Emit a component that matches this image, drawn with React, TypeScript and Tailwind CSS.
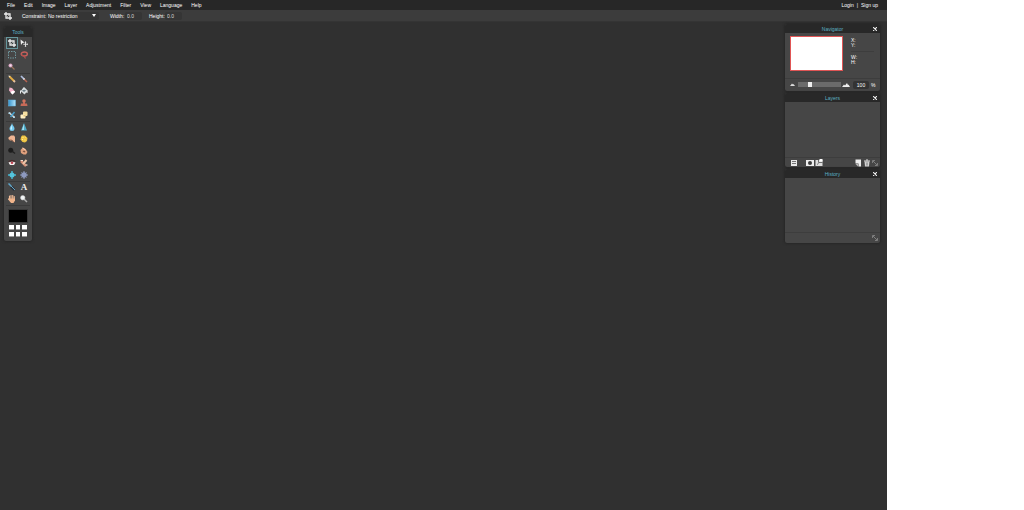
import type { ReactNode } from "react";

const menus = ["File", "Edit", "Image", "Layer", "Adjustment", "Filter", "View", "Language", "Help"];

function Icon({ children }: { children: ReactNode }) {
  return (
    <svg viewBox="0 0 16 16" className="block h-2 w-2" aria-hidden="true">
      {children}
    </svg>
  );
}

const crop = (
  <Icon>
    <path d="M4 0v12h12M0 4h12v12" fill="none" stroke="#eee" strokeWidth="2.6" />
    <path d="M5 11l6-6" stroke="#ccc" strokeWidth="1.4" />
  </Icon>
);

type Tool = { name: string; icon: ReactNode };

const groups: Tool[][] = [
  [
    { name: "Crop", icon: crop },
    {
      name: "Move",
      icon: (
        <Icon>
          <path d="M1 1l8 6-4 1-3 4z" fill="#eee" />
          <path d="M11 6v9M6.500 10.500h9" stroke="#ddd" strokeWidth="2" />
          <path d="M11 4l2 3H9zM11 16l2-2H9zM16 10.500l-2-2v4z" fill="#ddd" />
        </Icon>
      ),
    },
    {
      name: "Marquee",
      icon: (
        <Icon>
          <rect x="1" y="1" width="14" height="13" fill="none" stroke="#6f979e" strokeWidth="2" strokeDasharray="3 2" />
        </Icon>
      ),
    },
    {
      name: "Lasso",
      icon: (
        <Icon>
          <ellipse cx="8.500" cy="6" rx="6.200" ry="4" fill="none" stroke="#c8605c" strokeWidth="2.600" />
          <path d="M3 8l5 2 3 5" fill="none" stroke="#b8504c" strokeWidth="2.400" />
        </Icon>
      ),
    },
    {
      name: "Wand",
      icon: (
        <Icon>
          <path d="M7 7l6 6" stroke="#9b7358" strokeWidth="2.600" />
          <circle cx="5" cy="5" r="4" fill="#d5a0bd" />
          <circle cx="5" cy="5" r="2" fill="#f6e6ef" />
        </Icon>
      ),
    },
  ],
  [
    {
      name: "Pencil",
      icon: (
        <Icon>
          <path d="M3 3l9 9" stroke="#e5ad42" strokeWidth="3.600" />
          <path d="M1 1l4 1-3 3z" fill="#fff0d0" />
          <path d="M11 11l3 3" stroke="#e6c1a0" strokeWidth="3.600" />
        </Icon>
      ),
    },
    {
      name: "Brush",
      icon: (
        <Icon>
          <path d="M8 8l6 6" stroke="#b86452" strokeWidth="3" />
          <path d="M2 2l6 6" stroke="#aebdde" strokeWidth="3.500" />
          <path d="M7 7l2 2" stroke="#eee" strokeWidth="3.500" />
        </Icon>
      ),
    },
    {
      name: "Eraser",
      icon: (
        <Icon>
          <path d="M3 1l5 1 6 7-5 6-7-8z" fill="#f4b4ca" />
          <path d="M8 8l5 0 1 2-5 5-4-4z" fill="#fff" />
        </Icon>
      ),
    },
    {
      name: "Paint bucket",
      icon: (
        <Icon>
          <path d="M1 8l7-7 7 7-6 7z" fill="#d5dadc" />
          <path d="M4 7c3-2 6-2 8 0l-4 3z" fill="#6b7d86" />
          <path d="M1 7v6M5 5l3-4 6 6v5" fill="none" stroke="#e8eef0" strokeWidth="2" />
        </Icon>
      ),
    },
    {
      name: "Gradient",
      icon: (
        <Icon>
          <defs>
            <linearGradient id="blue">
              <stop stopColor="#3694ce" />
              <stop offset="1" stopColor="#b4e4fa" />
            </linearGradient>
          </defs>
          <rect x="1" y="2" width="14" height="12" fill="url(#blue)" stroke="#62b4df" />
        </Icon>
      ),
    },
    {
      name: "Clone stamp",
      icon: (
        <Icon>
          <circle cx="8" cy="4" r="3.500" fill="#d1745f" />
          <path d="M6 6h4v3h4l1 5H1l1-5h4z" fill="#c66a58" />
        </Icon>
      ),
    },
    {
      name: "Color replace",
      icon: (
        <Icon>
          <path d="M2 3l11 10" stroke="#e8e8e8" strokeWidth="3" />
          <path d="M13 2L5 12" stroke="#4ba3cf" strokeWidth="3" />
          <path d="M1 3h4v3H1zM10 11h4v3h-4z" fill="#a9d2e5" />
        </Icon>
      ),
    },
    {
      name: "Drawing",
      icon: (
        <Icon>
          <rect x="6" y="1" width="9" height="9" rx="2" fill="#f6dfa0" />
          <rect x="1" y="7" width="10" height="8" rx="2" fill="#fff0c5" />
          <path d="M7 8h4v3H7z" fill="#e1c47b" />
        </Icon>
      ),
    },
  ],
  [
    {
      name: "Blur",
      icon: (
        <Icon>
          <path d="M8 0c1 5 5 7 5 11a5 5 0 0 1-10 0C3 7 7 5 8 0z" fill="#74c9ef" />
          <path d="M8 3v10H5c-1-4 2-5 3-10z" fill="#c7efff" />
        </Icon>
      ),
    },
    {
      name: "Sharpen",
      icon: (
        <Icon>
          <path d="M8 0l6 15H2z" fill="#4eabc9" />
          <path d="M8 1v13H4z" fill="#a9e0ef" />
        </Icon>
      ),
    },
    {
      name: "Smudge",
      icon: (
        <Icon>
          <path d="M1 5l5-4h6l2 3v11l-3-2-2-3-5 1-3-3z" fill="#edb493" />
          <path d="M3 9l5 1 3 4" fill="none" stroke="#b5775a" strokeWidth="1.500" />
        </Icon>
      ),
    },
    {
      name: "Sponge",
      icon: (
        <Icon>
          <path d="M4 1h6l5 5-1 6-4 3-5-1-4-5 1-5z" fill="#efc443" />
          <path d="M5 5h2M10 5h1M4 9h2M9 10h2" stroke="#fff097" strokeWidth="2" />
        </Icon>
      ),
    },
    {
      name: "Dodge",
      icon: (
        <Icon>
          <circle cx="5.500" cy="6.500" r="5" fill="#1c1c1c" />
          <path d="M9 9l5 4" stroke="#222" strokeWidth="3" />
        </Icon>
      ),
    },
    {
      name: "Burn",
      icon: (
        <Icon>
          <path d="M1 6l5-5 5 3 4 6-3 5H7l-5-3z" fill="#dfa07d" />
          <path d="M5 9l3-2 3 2-2 2z" fill="#7a5443" />
          <path d="M5 2l6 4" stroke="#ffd4b5" strokeWidth="2" />
        </Icon>
      ),
    },
    {
      name: "Red eye",
      icon: (
        <Icon>
          <path d="M1 7c4-2 10-2 14 0l-3 5H4z" fill="#f4eded" />
          <path d="M1 5c4-3 10-3 14 0" fill="none" stroke="#4a2929" strokeWidth="2" />
          <circle cx="8" cy="7.500" r="2.600" fill="#bf4554" />
        </Icon>
      ),
    },
    {
      name: "Spot heal",
      icon: (
        <Icon>
          <path d="M2 4l10 10" stroke="#d18b73" strokeWidth="5" />
          <path d="M13 2L6 10" stroke="#edc6a9" strokeWidth="4" />
          <path d="M1 3h5M11 12h4" stroke="#f5ddcf" strokeWidth="2" />
        </Icon>
      ),
    },
    {
      name: "Bloat",
      icon: (
        <Icon>
          <path d="M8 0v16M0 8h16" stroke="#45b5d0" strokeWidth="3" />
          <circle cx="8" cy="8" r="5" fill="#55c4dc" />
        </Icon>
      ),
    },
    {
      name: "Pinch",
      icon: (
        <Icon>
          <circle cx="8" cy="8" r="5.500" fill="#8d99c2" />
          <path d="M8 0v16M0 8h16M3 3l10 10M13 3L3 13" stroke="#8d99bd" strokeWidth="2" />
        </Icon>
      ),
    },
  ],
  [
    {
      name: "Color picker",
      icon: (
        <Icon>
          <path d="M1 1l7 7" stroke="#5fa8cd" strokeWidth="3" />
          <path d="M6 7l7 7" stroke="#26323a" strokeWidth="5" />
          <path d="M6 6l8 8" stroke="#6ba4c4" strokeWidth="2" />
        </Icon>
      ),
    },
    {
      name: "Type",
      icon: <span className="font-['Liberation_Serif',serif] text-[9px] leading-2 font-bold text-[#eee]">A</span>,
    },
    {
      name: "Hand",
      icon: (
        <Icon>
          <path d="M3 2v8M6 1v8M9.500 1v8M12.500 3v8M1 8l5 5" fill="none" stroke="#f2bd98" strokeWidth="2.300" strokeLinecap="round" />
          <path d="M3 7h11v4l-3 5H6l-3-4z" fill="#efb38a" />
        </Icon>
      ),
    },
    {
      name: "Zoom",
      icon: (
        <Icon>
          <path d="M8 8l6 6" stroke="#aaa" strokeWidth="3" />
          <circle cx="5.500" cy="5.500" r="4.500" fill="#f2f5f6" stroke="#ccc" />
        </Icon>
      ),
    },
  ],
];

function Panel({ title, children }: { title: string; children: ReactNode }) {
  return (
    <section className="overflow-hidden rounded-[2px] bg-[#464646] shadow-[0_0_3px_#1d1d1d]">
      <header className="flex h-[9px] items-center bg-[#282828] px-[3px]">
        <span className="w-1" />
        <h2 className="flex-1 text-center text-[#5cb0c4]">{title}</h2>
        <button type="button" aria-label={`Close ${title}`} className="mt-px h-1 w-1">
          <svg viewBox="0 0 8 8" className="block h-1 w-1" aria-hidden="true">
            <path d="M0 0l8 8M8 0L0 8" stroke="#f0f0f0" strokeWidth="2.200" />
          </svg>
        </button>
      </header>
      {children}
    </section>
  );
}

function ResizeIcon() {
  return (
    <svg viewBox="0 0 12 12" className="block h-[6px] w-[6px]" aria-hidden="true">
      <path d="M1 6V1h5M11 6v5H6M2 2l8 8" fill="none" stroke="#8b8b8b" strokeWidth="1.600" />
    </svg>
  );
}

const layerActions: Tool[] = [
  {
    name: "Layer settings",
    icon: (
      <Icon>
        <path d="M2 2h12v12H2z" fill="#e8e8e8" />
        <path d="M4 5h8M4 9h8" stroke="#555" strokeWidth="1.600" />
      </Icon>
    ),
  },
  {
    name: "Add mask",
    icon: (
      <Icon>
        <path d="M0 2h16v12H0z" fill="#eee" />
        <circle cx="8" cy="8" r="4" fill="#3b3b3b" />
      </Icon>
    ),
  },
  {
    name: "Layer styles",
    icon: (
      <Icon>
        <path d="M1 2h14v12H1z" fill="#ddd" />
        <path d="M7 1v6h8M4 11l3-2" fill="none" stroke="#555" strokeWidth="1.600" />
        <path d="M9 0h6v5H9z" fill="#fff" />
      </Icon>
    ),
  },
  {
    name: "New layer",
    icon: (
      <Icon>
        <path d="M3 1h11v14H9V9H3z" fill="#eee" />
        <path d="M3 10l5 5v-5z" fill="#bbb" />
      </Icon>
    ),
  },
  {
    name: "Delete layer",
    icon: (
      <Icon>
        <path d="M3 5h10l-1 10H4z" fill="#ccc" />
        <path d="M2 4h12M6 2h4M6 7v6M10 7v6" stroke="#ddd" strokeWidth="2" />
        <path d="M8 7v6" stroke="#555" strokeWidth="1.500" />
      </Icon>
    ),
  },
];

function ActionButton({ tool }: { tool: Tool }) {
  return (
    <button type="button" aria-label={tool.name} className="h-2 w-2">
      {tool.icon}
    </button>
  );
}

export default function App() {
  return (
    <div className="flex min-h-screen bg-white font-['Liberation_Sans',sans-serif] text-[5px] leading-[6px] text-white">
      <div className="flex flex-1 flex-col bg-[#303030]">
        <nav className="flex h-[10px] items-center justify-between bg-[#272727] pr-[9px] pl-[7px]">
          <ul className="flex gap-[9px]">
            {menus.map((menu) => (
              <li key={menu} className="flex">
                <button type="button">{menu}</button>
              </li>
            ))}
          </ul>
          <div className="flex gap-[3px]">
            <a href="#login">Login</a>
            <span>|</span>
            <a href="#signup">Sign up</a>
          </div>
        </nav>

        <form className="flex h-3 items-center border-b border-[#343434] bg-[#3c3c3c] pl-1">
          {crop}
          <label htmlFor="constraint" className="ml-[10px] w-[25px]">
            Constraint:
          </label>
          <div className="flex h-2 w-[52px] items-center rounded-[2px] bg-[#353535] pr-[3px]">
            <select id="constraint" className="min-w-0 flex-1 appearance-none pl-px">
              <option>No restriction</option>
            </select>
            <svg viewBox="0 0 8 6" className="h-[3px] w-1" aria-hidden="true">
              <path d="M0 0h8L4 6z" fill="#fff" />
            </svg>
          </div>
          <label htmlFor="width" className="ml-[11px] w-[15px]">
            Width:
          </label>
          <input id="width" defaultValue="0.0" className="h-2 w-[17px] rounded-[2px] bg-[#353535] pl-[2px] text-[#ddd]" />
          <label htmlFor="height" className="ml-[7px] w-4">
            Height:
          </label>
          <input id="height" defaultValue="0.0" className="h-2 w-[17px] rounded-[2px] bg-[#353535] pl-[2px] text-[#ddd]" />
        </form>

        <main className="flex flex-1 items-start justify-between pr-[7px] pl-1">
          <section className="mt-[5px] w-7 overflow-hidden rounded-[2px] bg-[#464646] pb-1 shadow-[0_0_3px_#1d1d1d]">
            <h2 className="h-[10px] bg-[#282828] pt-[2px] text-center text-[#5cb0c4]">Tools</h2>
            {groups.map((group, i) => (
              <div key={i} className="mx-[2px] grid grid-cols-2 shadow-[0_1px_#3a3a3a]">
                {group.map((tool) => (
                  <button
                    key={tool.name}
                    type="button"
                    aria-label={tool.name}
                    className={
                      tool.name === "Crop"
                        ? "flex h-3 items-center justify-center border border-[#66969c] bg-[#3b4243]"
                        : "flex h-3 items-center justify-center"
                    }
                  >
                    {tool.icon}
                  </button>
                ))}
              </div>
            ))}
            <button type="button" aria-label="Foreground color" className="mx-auto mt-1 block h-[14px] w-5 border border-[#383838] bg-black" />
            <div className="mx-[5px] mt-[2px] grid grid-cols-3 gap-x-[2px] gap-y-[2px]">
              {["1", "2", "3", "4", "5", "6"].map((n) => (
                <button key={n} type="button" aria-label={`Swatch ${n}`} className="h-[5px] border-b border-[#999] bg-white" />
              ))}
            </div>
          </section>

          <aside className="mt-[2px] flex w-[95px] flex-col gap-[2px]">
            <Panel title="Navigator">
              <div className="flex h-[45px] pt-[3px] pl-[5px]">
                <div className="h-[35px] w-[53px] border border-[#e05555] bg-white" />
                <dl className="ml-2 flex-1 pt-[2px] pr-[6px]">
                  <dt className="leading-[5px]">X:</dt>
                  <dt className="leading-[5px]">Y:</dt>
                  <dt className="mt-[3px] border-t border-[#3d3d3d] pt-[3px] leading-[5px]">W:</dt>
                  <dt className="leading-[5px]">H:</dt>
                </dl>
              </div>
              <div className="flex h-[13px] items-center border-t border-[#3d3d3d] pb-px pl-[5px]">
                <svg viewBox="0 0 10 6" className="h-[3px] w-[5px]" aria-hidden="true">
                  <path d="M0 6l4-5 2 2 1-1 3 4z" fill="#ddd" />
                </svg>
                <input
                  type="range"
                  aria-label="Zoom"
                  min="0"
                  max="100"
                  defaultValue="26"
                  className="ml-[3px] h-[5px] w-[43px] appearance-none bg-[#6b6b6b] [&::-webkit-slider-thumb]:h-[5px] [&::-webkit-slider-thumb]:w-1 [&::-webkit-slider-thumb]:appearance-none [&::-webkit-slider-thumb]:bg-[#eee]"
                />
                <svg viewBox="0 0 16 8" className="ml-[1px] h-1 w-2" aria-hidden="true">
                  <path d="M0 8l4-5 2 2 4-5 2 4 1-1 3 5z" fill="#eee" />
                </svg>
                <input aria-label="Zoom percent" defaultValue="100" className="ml-[3px] h-2 w-4 rounded-[2px] bg-[#333] text-center" />
                <span className="ml-[2px]">%</span>
              </div>
            </Panel>
            <Panel title="Layers">
              <div className="h-[55px]" />
              <div className="flex h-[10px] items-center border-t border-[#3d3d3d] pr-[2px] pl-[5px]">
                <ActionButton tool={layerActions[0]} />
                <div className="ml-2 flex gap-px">
                  <ActionButton tool={layerActions[1]} />
                  <ActionButton tool={layerActions[2]} />
                </div>
                <div className="ml-auto flex items-center gap-px">
                  <ActionButton tool={layerActions[3]} />
                  <ActionButton tool={layerActions[4]} />
                  <ResizeIcon />
                </div>
              </div>
            </Panel>
            <Panel title="History">
              <div className="h-[54px]" />
              <div className="flex h-[11px] items-center justify-end border-t border-[#3d3d3d] pr-[2px]">
                <ResizeIcon />
              </div>
            </Panel>
          </aside>
        </main>
      </div>
      <div className="w-[137px] bg-white" />
    </div>
  );
}
